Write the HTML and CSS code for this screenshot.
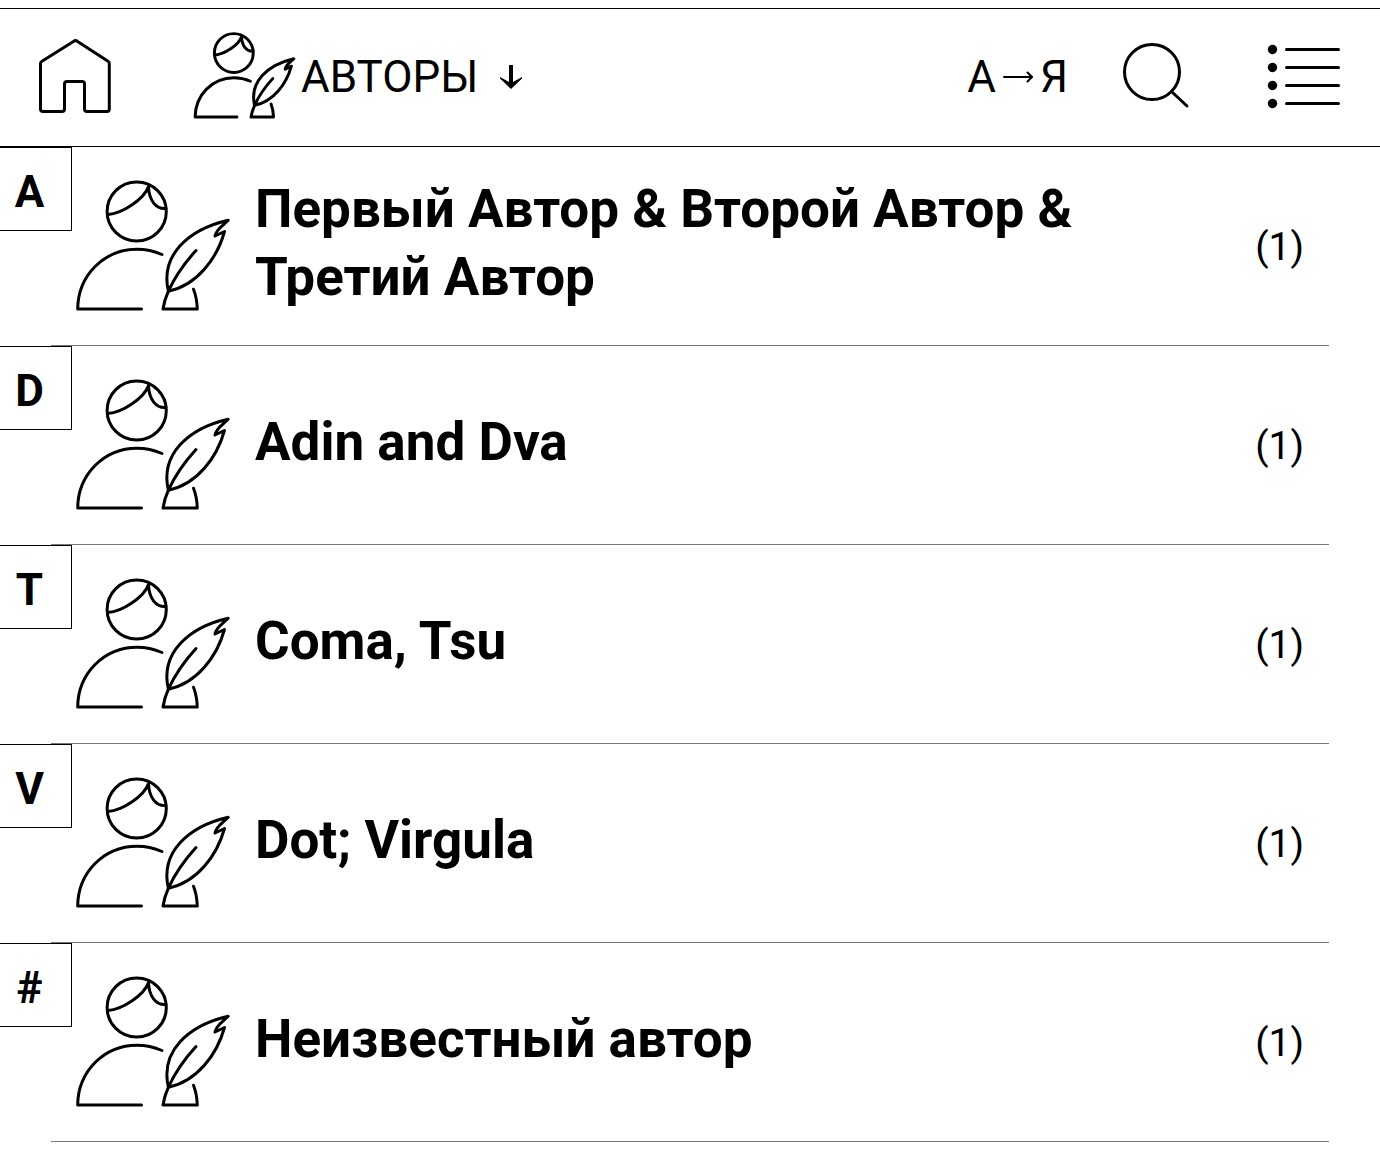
FILE: index.html
```html
<!DOCTYPE html>
<html lang="ru">
<head>
<meta charset="utf-8">
<meta name="viewport" content="width=device-width, initial-scale=1">
<title>Авторы</title>
<link rel="stylesheet" href="styles.css">
</head>
<body>
<svg class="sprite" aria-hidden="true">
  <symbol id="author" viewBox="0 0 154 131">
    <circle cx="60.700" cy="30.500" r="29.6"/>
    <path d="M32 33.500C46 32.500 68 18.500 72.500 5.500M72.500 5.500C73 19.500 80 28.500 90 27.500"/>
    <path d="M86 73.500C78 70 70 68.200 61 68.200C28 68.200 2 94.500 1.700 128H65.500"/>
    <path d="M152.200 39.200C112 48.500 84 74.500 92.400 110.200C121 104.500 141 77.500 148.500 50.500L139 55C140 48.500 147 44.500 152.200 39.200Z"/>
    <path d="M120 69.500C109 81.500 99 95.500 92.400 110.200C90 115.500 88 121.500 87 128H121.300C121 120.500 120 114.500 117.500 108.200"/>
  </symbol>
</svg>
<header class="toolbar">
  <a class="home" href="#" aria-label="Домой">
    <svg width="74" height="76" viewBox="0 0 74 76"><path d="M4 23.300 35.800 3.300Q37.500 2 39.200 3.300L70 23.300Q71.300 24 71.300 25.500V71Q71.300 73.500 69 73.500H49Q46.500 73.500 46.500 71V46Q46.500 43.500 44 43.500H29Q26.500 43.500 26.500 46V71Q26.500 73.500 24 73.500H5Q2.500 73.500 2.500 71V25.500Q2.500 24 4 23.300Z"/></svg>
  </a>
  <button class="title" type="button">
    <svg class="author-small" aria-hidden="true"><use href="#author"/></svg>
    <span class="caption">АВТОРЫ
      <svg class="down" width="22" height="24" viewBox="0 0 22 24" aria-hidden="true"><path d="M9 0H13V17L22 12V13.500L11 24 0 13.500V12L9 17Z"/></svg>
    </span>
  </button>
  <button class="sort" type="button" aria-label="Сортировка от А до Я">
    <span>А</span>
    <svg class="right" width="32" height="12" viewBox="0 0 32 12" aria-hidden="true"><path d="M2 6H30"/><path d="M25.500 1.500 30 6 25.500 10.500"/></svg>
    <span>Я</span>
  </button>
  <button class="search" type="button" aria-label="Поиск">
    <svg width="68" height="68" viewBox="0 0 68 68"><circle cx="30" cy="30" r="27.500"/><path d="M49.500 49.500 65 64"/></svg>
  </button>
  <button class="view" type="button" aria-label="Вид списка">
    <svg width="74" height="66" viewBox="0 0 74 66"><path d="M20.500 6.500H72.500M20.500 24.500H72.500M20.500 42.500H72.500M20.500 60.500H72.500"/><g class="dots"><circle cx="6.500" cy="6.500" r="4.700"/><circle cx="6.500" cy="24.500" r="4.700"/><circle cx="6.500" cy="42.500" r="4.700"/><circle cx="6.500" cy="60.500" r="4.700"/></g></svg>
  </button>
</header>
<main>
  <ul class="authors">
    <li><span class="badge">A</span><a href="#"><svg class="author" aria-hidden="true"><use href="#author"/></svg><span class="name">Первый Автор &amp; Второй Автор &amp; Третий Автор</span><span class="count">(1)</span></a></li>
    <li><span class="badge">D</span><a href="#"><svg class="author" aria-hidden="true"><use href="#author"/></svg><span class="name">Adin and Dva</span><span class="count">(1)</span></a></li>
    <li><span class="badge">T</span><a href="#"><svg class="author" aria-hidden="true"><use href="#author"/></svg><span class="name">Coma, Tsu</span><span class="count">(1)</span></a></li>
    <li><span class="badge">V</span><a href="#"><svg class="author" aria-hidden="true"><use href="#author"/></svg><span class="name">Dot; Virgula</span><span class="count">(1)</span></a></li>
    <li><span class="badge">#</span><a href="#"><svg class="author" aria-hidden="true"><use href="#author"/></svg><span class="name">Неизвестный автор</span><span class="count">(1)</span></a></li>
  </ul>
</main>
</body>
</html>
```
FILE: styles.css
```css
* { box-sizing: border-box; }

body {
  margin: 0;
  padding-top: 8px;
  background: #fff;
  color: #000;
  font-family: Roboto, "Noto Sans", sans-serif;
}

svg {
  display: block;
  flex: none;
  overflow: visible;
  fill: none;
  stroke: #000;
  stroke-width: 3px;
  stroke-linecap: round;
  stroke-linejoin: round;
}

symbol { overflow: visible; }

.sprite { position: absolute; width: 0; height: 0; }

.dots { fill: #000; stroke: none; }

a { color: inherit; text-decoration: none; }

button {
  margin: 0;
  padding: 0;
  border: 0;
  background: none;
  color: inherit;
  font: inherit;
  line-height: inherit;
  cursor: pointer;
}

.toolbar {
  display: flex;
  align-items: center;
  height: 139px;
  padding: 0 40px 4px 38px;
  border-top: 1px solid #000;
  border-bottom: 1px solid #000;
  font-size: 44px;
  line-height: 52px;
}

.title {
  display: flex;
  align-items: center;
  gap: 6px;
  margin-left: 82px;
  margin-right: auto;
}

.author-small {
  width: 101px;
  height: 86px;
  stroke-width: 4.5px;
}

.caption,
.sort {
  display: flex;
  align-items: center;
  padding-top: 2px;
}

.caption { gap: 22px; }

.sort { gap: 6px; }

.down { fill: #000; stroke: none; }

.right { stroke-width: 2px; }

.search { margin-left: 54px; }

.view { margin-left: 76px; }

.authors {
  margin: 0;
  padding: 0 51px;
  list-style: none;
}

.authors li {
  position: relative;
  border-bottom: 1px solid #777;
}

.authors a {
  display: flex;
  align-items: center;
  min-height: 198px;
  padding: 0 25px;
}

.author { width: 154px; height: 131px; }

.badge {
  position: absolute;
  top: 0;
  left: -51px;
  width: 72px;
  height: 84px;
  padding-right: 12px;
  border: 1px solid #000;
  border-left: 0;
  font-size: 44px;
  font-weight: 700;
  line-height: 88px;
  text-align: center;
}

.name {
  flex: 1;
  margin: 0 100px 0 25px;
  padding-bottom: 6px;
  font-size: 53px;
  font-weight: 700;
  line-height: 68px;
}

.count {
  padding-top: 2px;
  font-size: 39px;
}
```
